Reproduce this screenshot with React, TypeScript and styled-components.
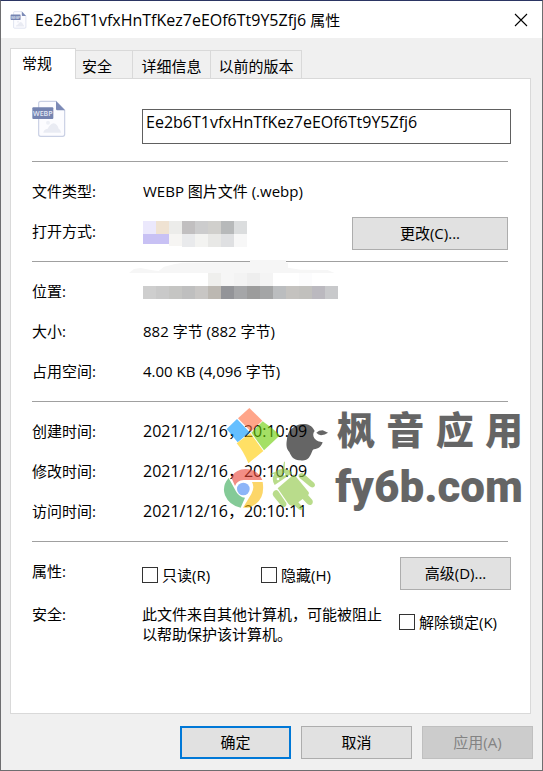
import React from "react";
import styled, { createGlobalStyle, css } from "styled-components";

const GlobalStyle = createGlobalStyle`
  *, *::before, *::after { box-sizing: border-box; }
  body { margin: 0; background: #f0f0f0; }
  body, button, input {
    font-family: "Open Sans", "Noto Sans CJK SC", sans-serif;
    font-size: 15px;
    line-height: 20px;
    color: #000;
  }
`;

const Dialog = styled.main`
  display: flex;
  flex-direction: column;
  min-height: 100vh;
  border: 1px solid #6e6e70;
  border-top-color: #2b3563;
  background: #f0f0f0;
`;

const TitleBar = styled.header`
  display: flex;
  align-items: center;
  height: 37px;
  padding: 0 13px 0 9px;
  background: #fff;
`;

const Title = styled.h1`
  flex: 1;
  margin: 0 0 0 8px;
  font-size: 15px;
  font-weight: 400;
  white-space: nowrap;
`;

const FileName = styled.span`
  font-size: 16px;
`;

const CloseButton = styled.button`
  display: flex;
  padding: 1px;
  border: 0;
  background: none;
`;

const TabList = styled.div`
  display: flex;
  align-items: flex-end;
  margin: 10px 9px 0;
`;

const Tab = styled.button<{ $active?: boolean; $width: number }>`
  position: relative;
  width: ${(p) => p.$width}px;
  height: 28px;
  margin: 0;
  padding: 2px 0 0;
  border: 1px solid #d9d9d9;
  border-left-width: 0;
  border-bottom: 0;
  background: #f0f0f0;
  white-space: nowrap;
  ${(p) =>
    p.$active &&
    css`
      z-index: 1;
      height: 31px;
      margin-bottom: -1px;
      padding: 0 12px 2px 0;
      border-left-width: 1px;
      background: #fff;
    `}
`;

const TabLabel = styled.span`
  padding-right: 14px;
`;

const Panel = styled.section`
  flex: 1;
  margin: 0 11px 0 9px;
  padding: 21px 22px 0 21px;
  border: 1px solid #d9d9d9;
  background: #fff;
`;

const FileHeader = styled.div`
  display: grid;
  grid-template-columns: 110px 1fr;
  align-items: start;
  margin-right: -3px;
  padding-bottom: 17px;
`;

const NameInput = styled.input`
  width: 100%;
  height: 35px;
  margin-top: 9px;
  padding: 0 3px 10px;
  border: 1px solid #606060;
  border-radius: 0;
  background: #fff;
  font-size: 16px;
`;

const Group = styled.div`
  position: relative;
  padding: 10px 0 9px;
  border-top: 1px solid #a0a0a0;
`;

const Row = styled.div`
  display: grid;
  grid-template-columns: 111px 1fr auto;
  align-items: center;
  height: 40px;
`;

const Label = styled.span`
  padding-bottom: 2px;
`;

const Value = styled.span<{ $large?: boolean }>`
  padding-bottom: 2px;
  font-size: ${(p) => (p.$large ? 16 : 15)}px;
  white-space: nowrap;
`;

const MosaicCell = styled.div`
  position: relative;
  display: flex;
  align-items: flex-end;
  height: 40px;
  padding-bottom: 5px;
`;

const PushButton = styled.button<{ $wide?: boolean; $primary?: boolean }>`
  width: ${(p) => (p.$wide ? 156 : 111)}px;
  height: 33px;
  margin-top: ${(p) => (p.$wide ? 3 : 0)}px;
  padding: 0 0 2px;
  border: ${(p) => (p.$primary ? "2px solid #0078d7" : "1px solid #adadad")};
  background: #e1e1e1;
  &:disabled {
    border-color: #bfbfbf;
    background: #ccc;
    color: #838383;
  }
`;

const OptionsRow = styled.div`
  display: grid;
  grid-template-columns: 110px 119px 1fr auto;
  align-items: start;
  margin-right: -3px;
  padding-top: 5px;
`;

const SecurityRow = styled.div`
  display: grid;
  grid-template-columns: 110px 1fr 112px;
  align-items: start;
  margin-right: -3px;
  padding-top: 14px;
`;

const OptionsLabel = styled.span`
  padding-top: 4px;
`;

const Notice = styled.p`
  margin: 0;
  max-width: 242px;
`;

const CheckLabel = styled.label`
  display: flex;
  align-items: center;
  gap: 4px;
  padding-top: 8px;
  white-space: nowrap;
`;

const CheckBox = styled.input`
  appearance: none;
  flex: none;
  width: 16px;
  height: 16px;
  margin: 0;
  border: 1px solid #333;
  background: #fff;
  &:checked { background: #0078d7; box-shadow: inset 0 0 0 3px #fff; }
`;

const Footer = styled.footer`
  display: flex;
  justify-content: flex-end;
  gap: 10px;
  padding: 12px 9px 11px;
`;

const SmudgeSvg = styled.svg`
  position: absolute;
  left: -19px;
  bottom: 11px;
`;

const Watermark = styled.div`
  position: absolute;
  top: -2px;
  right: -15px;
  display: flex;
  align-items: flex-start;
  color: #000;
  opacity: 0.6;
  pointer-events: none;
`;

const WatermarkWords = styled.div`
  width: 192px;
  padding-top: 3px;
  font-family: Roboto, "Noto Sans CJK SC", sans-serif;
  font-weight: 900;
`;

const WatermarkName = styled.div`
  display: flex;
  justify-content: space-between;
  padding-left: 6px;
  font-size: 38px;
  line-height: 56px;
`;

const WatermarkSite = styled.div`
  font-size: 44px;
  line-height: 56px;
  text-align: right;
`;

function WebpIcon({ width, height }: { width: number; height: number }) {
  return (
    <svg width={width} height={height} viewBox="0 0 102 114" aria-hidden="true">
      <path
        d="M26 4H72L98 31V103Q98 109 92 109H26Q20 109 20 103V10Q20 4 26 4Z"
        fill="#fcfcff"
        stroke="#c9d0e4"
        strokeWidth="3.5"
      />
      <path d="M72 3L99 31H76Q72 31 72 27Z" fill="#7c8ab6" />
      <path d="M34 98Q35 88 47 86Q54 72 65 70Q76 72 80 86Q86 88 87 98Z" fill="#e9ebf3" />
      <circle cx="48" cy="68" r="6" fill="#edeff6" />
      <rect x="1" y="22" width="63" height="35" rx="3" fill="#7584b1" />
      <text
        x="32.5"
        y="48"
        textAnchor="middle"
        fontFamily="Open Sans, sans-serif"
        fontSize="21"
        fontWeight="600"
        fill="#e3e8f5"
      >
        WEBP
      </text>
    </svg>
  );
}

const APP_TOP = ["#ebe8fc", "#efe2d2", "#ececea", "#c1bfc0", "#cccccd", "#d0cfcc", "#b7b9ba", "#dbddde"];
const APP_BOTTOM = ["#c8c1f4", "#c8c1f4", "#f6f5f3", "#e9eaec", "#f3f3f1", "#e8e8e6", "#dfe0e2", "#f7f7f7"];
const PATH_CELLS = [
  "#cecece", "#c9c9c9", "#c5c5c3", "#bfbfbf", "#c8c6c4", "#bcb8b2", "#939498", "#a5a6a8",
  "#9c9c9c", "#a4a5a6", "#bbbdbf", "#c4c2bf", "#c1c0bd", "#bbb9bf", "#c8c9cb",
];
const PATH_FAINT = ["#efefed", "#f6f6f6", "#f3f3f3", "#eeeeee", "#f4f4f4", "#fff", "#fff", "#fcfcfd"];

function AppMosaic() {
  return (
    <svg width="104" height="26" viewBox="0 0 104 26" aria-hidden="true" shapeRendering="crispEdges">
      {APP_TOP.map((c, i) => (
        <rect key={i} x={i * 13} width="13" height="13" fill={c} />
      ))}
      {APP_BOTTOM.map((c, i) => (
        <rect key={i} x={i * 13} y="13" width="13" height={i < 2 ? 10 : i === 2 ? 12 : 13} fill={c} />
      ))}
    </svg>
  );
}

function PathMosaic() {
  return (
    <SmudgeSvg width="214" height="44" viewBox="0 0 642 132" aria-hidden="true">
      <path
        d="M15 48L30 36L50 33L85 40L104 42L120 29L150 22L175 17L378 15V9H405V9H486V17L492 18V32L530 38L610 39L632 48Z"
        fill="#f6f6f6"
      />
      {PATH_FAINT.map((c, i) => (
        <rect key={i} x={252 + i * 39} y="48" width="39" height="39" fill={c} shapeRendering="crispEdges" />
      ))}
      {PATH_CELLS.map((c, i) => (
        <rect key={i} x={57 + i * 39} y="87" width="39" height="39" fill={c} shapeRendering="crispEdges" />
      ))}
    </SmudgeSvg>
  );
}

function PlatformLogos() {
  return (
    <svg width="111" height="114" viewBox="30 0 333 342" aria-hidden="true">
      <path d="M118 24L157 62L123 95L84 55Z" fill="#ff6a3c" />
      <path d="M81 57L119 97L83 127Q69 110 50 87Z" fill="#0096ff" />
      <path d="M158 64Q186 83 210 106L162 151L124 98Z" fill="#68cc00" />
      <path d="M121 99L160 153L115 190Q101 154 80 130Z" fill="#ffcc00" />

      <path
        d="M248 84C260 74 270 71 285 72C300 74 309 82 314 93C309 98 308 107 313 115C319 123 329 126 338 127C334 139 325 147 312 148C306 149 307 157 302 164C294 181 283 182 267 181C252 180 244 171 238 156C227 145 229 130 231 117C233 100 239 90 248 84Z"
        fill="#000"
      />
      <path d="M319 98Q326 91 338 91L354 98Q345 105 333 106Q325 105 319 98Z" fill="#000" />

      <path d="M63 230Q80 207 106 207Q143 208 157 240H101Q81 241 75 258Z" fill="#ea4335" />
      <path d="M56 234L79 276Q89 292 105 293L92 323Q58 317 45 286Q35 258 56 234Z" fill="#34a853" />
      <path d="M126 246H158Q165 291 138 311Q119 326 99 323L124 282Q135 262 126 246Z" fill="#fbbc05" />
      <circle cx="100" cy="267" r="19" fill="#4285f4" />

      <g fill="#8cc63f">
        <path
          fillRule="evenodd"
          d="M194 255Q183 238 193 221L181 224V221L195 216Q204 206 218 207L222 185H225L224 207Q239 209 247 219ZM204 233A4 4 0 1 0 204 241A4 4 0 1 0 204 233ZM222 219A4 4 0 1 0 222 227A4 4 0 1 0 222 219Z"
        />
        <path d="M203 265L252 223L295 275Q299 280 294 285L307 300Q311 309 304 314Q296 317 290 310L278 297L265 307L280 324Q276 333 266 328L252 315Q242 321 235 311Z" />
        <path d="M266 224Q273 215 282 222L312 248Q318 255 312 261Q305 265 298 258L269 234Q264 229 266 224Z" />
        <path d="M190 275Q198 266 205 274L229 309Q231 318 223 321Q216 322 212 315L190 288Q186 281 190 275Z" />
      </g>
    </svg>
  );
}

const SIZE_ROWS = [
  ["大小:", "882 字节 (882 字节)"],
  ["占用空间:", "4.00 KB (4,096 字节)"],
];
const DATE_ROWS = [
  ["创建时间:", "2021/12/16，20:10:09"],
  ["修改时间:", "2021/12/16，20:10:09"],
  ["访问时间:", "2021/12/16，20:10:11"],
];

function TextRow({ label, value, large }: { label: string; value: string; large?: boolean }) {
  return (
    <Row>
      <Label>{label}</Label>
      <Value $large={large}>{value}</Value>
    </Row>
  );
}

export default function App() {
  return (
    <>
      <GlobalStyle />
      <Dialog>
        <TitleBar>
          <WebpIcon width={17} height={18} />
          <Title><FileName>Ee2b6T1vfxHnTfKez7eEOf6Tt9Y5Zfj6</FileName> 属性</Title>
          <CloseButton type="button" aria-label="关闭">
            <svg width="14" height="14" viewBox="0 0 14 14" aria-hidden="true">
              <path d="M1 1L13 13M13 1L1 13" stroke="#000" strokeWidth="1.1" />
            </svg>
          </CloseButton>
        </TitleBar>

        <TabList role="tablist">
          <Tab type="button" role="tab" aria-selected="true" $active $width={66}>常规</Tab>
          <Tab type="button" role="tab" aria-selected="false" $width={57}>
            <TabLabel>安全</TabLabel>
          </Tab>
          <Tab type="button" role="tab" aria-selected="false" $width={78}>详细信息</Tab>
          <Tab type="button" role="tab" aria-selected="false" $width={91}>以前的版本</Tab>
        </TabList>

        <Panel role="tabpanel">
          <FileHeader>
            <WebpIcon width={34} height={38} />
            <NameInput aria-label="文件名" defaultValue="Ee2b6T1vfxHnTfKez7eEOf6Tt9Y5Zfj6" />
          </FileHeader>

          <Group>
            <TextRow label="文件类型:" value="WEBP 图片文件 (.webp)" />
            <Row>
              <Label>打开方式:</Label>
              <MosaicCell><AppMosaic /></MosaicCell>
              <PushButton type="button" $wide>更改(C)...</PushButton>
            </Row>
          </Group>

          <Group>
            <Row>
              <Label>位置:</Label>
              <MosaicCell><PathMosaic /></MosaicCell>
            </Row>
            {SIZE_ROWS.map(([label, value]) => (
              <TextRow key={label} label={label} value={value} />
            ))}
          </Group>

          <Group>
            {DATE_ROWS.map(([label, value]) => (
              <TextRow key={label} label={label} value={value} large />
            ))}
            <Watermark>
              <PlatformLogos />
              <WatermarkWords>
                <WatermarkName>
                  <span>枫</span>
                  <span>音</span>
                  <span>应</span>
                  <span>用</span>
                </WatermarkName>
                <WatermarkSite>fy6b.com</WatermarkSite>
              </WatermarkWords>
            </Watermark>
          </Group>

          <Group>
            <OptionsRow>
              <OptionsLabel>属性:</OptionsLabel>
              <CheckLabel><CheckBox type="checkbox" />只读(R)</CheckLabel>
              <CheckLabel><CheckBox type="checkbox" />隐藏(H)</CheckLabel>
              <PushButton type="button">高级(D)...</PushButton>
            </OptionsRow>
            <SecurityRow>
              <span>安全:</span>
              <Notice>此文件来自其他计算机，可能被阻止以帮助保护该计算机。</Notice>
              <CheckLabel><CheckBox type="checkbox" />解除锁定(K)</CheckLabel>
            </SecurityRow>
          </Group>
        </Panel>

        <Footer>
          <PushButton type="button" $primary>确定</PushButton>
          <PushButton type="button">取消</PushButton>
          <PushButton type="button" disabled>应用(A)</PushButton>
        </Footer>
      </Dialog>
    </>
  );
}
